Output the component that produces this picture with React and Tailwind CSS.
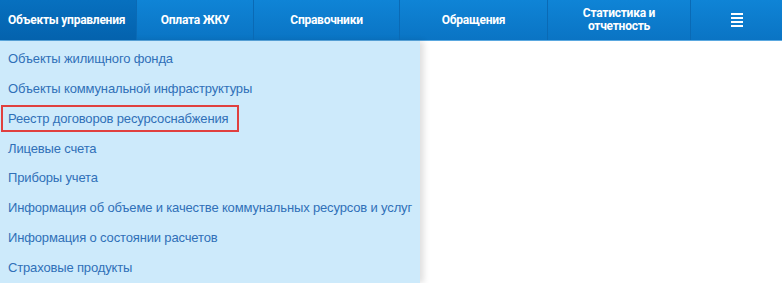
import React from "react";

const tabs = [
  { label: "Объекты управления", w: "w-[137px]", active: true },
  { label: "Оплата ЖКУ", w: "w-[117px]" },
  { label: "Справочники", w: "w-[146px]" },
  { label: "Обращения", w: "w-[148px]" },
  { label: "Статистика и отчетность", w: "w-[143px]", two: true },
];

const items = [
  "Объекты жилищного фонда",
  "Объекты коммунальной инфраструктуры",
  "Реестр договоров ресурсоснабжения",
  "Лицевые счета",
  "Приборы учета",
  "Информация об объеме и качестве коммунальных ресурсов и услуг",
  "Информация о состоянии расчетов",
  "Страховые продукты",
];

export default function App() {
  return (
    <div className="w-[782px] h-[283px] bg-white overflow-hidden relative">
      <div className="flex h-[41px] bg-gradient-to-b from-[#0f84d6] to-[#0a74c4] border-b border-[#5aa8e0] text-white font-['Roboto',sans-serif] font-bold text-[12px] tracking-[-0.25px]">
        {tabs.map((t, i) => (
          <div
            key={i}
            className={`${t.w} shrink-0 flex items-center border-r border-[#0a6ab5] whitespace-nowrap ${
              t.active ? "bg-gradient-to-b from-[#0770bf] to-[#0462ad] justify-start pl-[8px]" : "justify-center"
            }`}
          >
            {t.two ? (
              <div className="text-center leading-[13px]">
                <div>Статистика и</div>
                <div>отчетность</div>
              </div>
            ) : (
              <span>{t.label}</span>
            )}
          </div>
        ))}
        <div className="flex-1 flex items-center justify-center">
          <div className="flex flex-col gap-[2px] w-[12px]">
            <div className="h-[2px] bg-white" />
            <div className="h-[2px] bg-white" />
            <div className="h-[2px] bg-white" />
            <div className="h-[2px] bg-white" />
          </div>
        </div>
      </div>
      <div className="w-[420px] h-[242px] bg-[#cdeafb] shadow-[4px_0_6px_rgba(0,0,0,0.12)] pt-[3px] font-['Liberation_Sans',Arial,sans-serif] text-[13px] tracking-[-0.15px] text-[#3070b8] whitespace-nowrap">
        {items.map((it, i) => (
          <div key={i} className="h-[29.8px] flex items-center">
            {i === 2 ? (
              <div className="ml-[1px] w-[238px] h-[27px] border-2 border-[#e0403f] flex items-center pl-[5px]">
                {it}
              </div>
            ) : (
              <div className="pl-[8px]">{it}</div>
            )}
          </div>
        ))}
      </div>
    </div>
  );
}
